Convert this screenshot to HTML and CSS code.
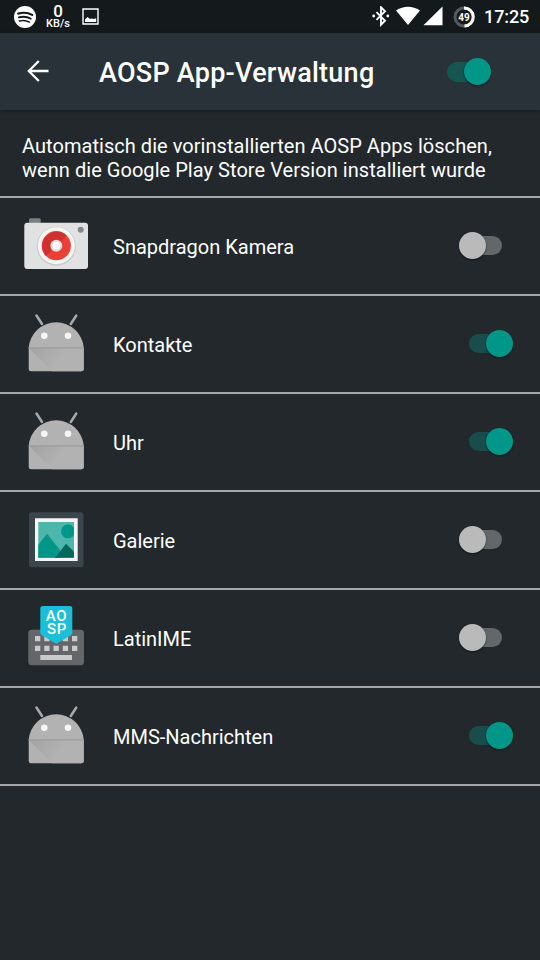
FILE: index.html
```html
<!DOCTYPE html>
<html lang="de">
<head>
<meta charset="utf-8">
<title>AOSP App-Verwaltung</title>
<link rel="stylesheet" href="styles.css">
</head>
<body>
<svg class="defs" aria-hidden="true">
  <linearGradient id="fade" x1="0" y1="0" x2="1" y2="0.3"><stop offset="0" stop-color="#a2a2a2"/><stop offset="0.65" stop-color="#b2b2b2"/></linearGradient>
  <symbol id="android" viewBox="0 0 68 76">
    <path d="M14.500 9.500l5.500 8.500M54.300 9.500l-5.500 8.500" stroke="#a9a9a9" stroke-width="2.500" stroke-linecap="round"/>
    <path d="M6.700 41.500a27.600 27.600 0 0 1 55 0v21.200a2.500 2.500 0 0 1-2.500 2.500h-50a2.500 2.500 0 0 1-2.500-2.500z" fill="#b2b2b2"/>
    <path d="M7 42h54.700v20.700a2.500 2.500 0 0 1-2.500 2.500H30z" fill="url(#fade)"/>
    <path d="M6.700 41.200h55v1.200h-55z" fill="#9b9b9b"/>
    <circle cx="22.300" cy="29.700" r="3.300" fill="#f5f5f5"/><circle cx="46" cy="29.700" r="3.300" fill="#f5f5f5"/>
  </symbol>
</svg>
<div class="status">
  <svg class="spotify" width="22" height="22" viewBox="0 0 22 22" fill="none" stroke="#14191c" stroke-linecap="round"><circle cx="11" cy="11" r="11" fill="#fff" stroke="none"/><path d="M4.200 7.600c5-1.400 10-.9 14 1.300" stroke-width="2.200"/><path d="M4.800 11.400c4.200-1.100 8.500-.7 12 1.300" stroke-width="1.800"/><path d="M5.300 14.900c3.600-.9 7.200-.6 10 1.200" stroke-width="1.500"/></svg>
  <div class="speed"><span class="rate">0</span><span class="unit">KB/s</span></div>
  <svg class="picture" width="17" height="17" viewBox="0 0 17 17"><path d="M1 1h15v15H1z" fill="none" stroke="#fff" stroke-width="1.400"/><path d="M3 14v-2.500l2.500-2.500 2.500 2 1.700-.5 2 .5 2.500-.8V14z" fill="#fff"/></svg>
  <svg class="signals" width="72" height="22" viewBox="0 0 72 22"><path d="M4.500 6.200l8.500 8.600-4 3.900V1.300l4 3.900-8.500 8.600" fill="none" stroke="#fff" stroke-width="1.900"/><circle cx="1.700" cy="10" r="1.400" fill="#fff"/><circle cx="15.800" cy="10" r="1.400" fill="#fff"/><path d="M24 4.500q12-7.500 24 0L36 19z" fill="#fff"/><path d="M51.500 19.300L70.500.5v18.800z" fill="#fff"/></svg>
  <svg class="battery" width="22" height="22" viewBox="0 0 22 22"><circle cx="11" cy="11" r="9" fill="none" stroke="#55595b" stroke-width="3"/><path d="M11 2a9 9 0 0 1 .5 18" fill="none" stroke="#fff" stroke-width="3"/><text x="11" y="14.500" text-anchor="middle">49</text></svg>
  <span class="clock">17:25</span>
</div>
<header class="bar">
  <svg class="back" width="22" height="22" viewBox="0 0 22 22"><path d="M21.500 11H1.800M11.800 1L1.800 11l10 10" fill="none" stroke="#fff" stroke-width="2.300"/></svg>
  <h1>AOSP App-Verwaltung</h1>
  <span class="switch on main"></span>
</header>
<p class="intro">Automatisch die vorinstallierten AOSP Apps löschen,<br>wenn die Google Play Store Version installiert wurde</p>
<ul class="list">
  <li><svg class="icon" viewBox="0 0 68 76"><rect x="7" y="10.300" width="11.700" height="8" rx="1.500" fill="#7c7e7f"/><rect x="2.300" y="14.700" width="63.700" height="46.300" rx="3" fill="#e0e2e1"/><circle cx="34.300" cy="38.300" r="19.500" fill="#c8cac9"/><circle cx="34.300" cy="37.700" r="18.500" fill="#f5f5f5"/><circle cx="34.300" cy="37.700" r="14.600" fill="#ea4035"/><path d="M24 48A14.600 14.600 0 0 1 44.600 27.400z" fill="#cf3130"/><circle cx="34.300" cy="37.700" r="6" fill="#dcdcdc"/><circle cx="34.300" cy="37.700" r="3.800" fill="#fff"/><circle cx="58.700" cy="21.700" r="3" fill="#858788"/></svg><span class="name">Snapdragon Kamera</span><span class="switch"></span></li>
  <li><svg class="icon"><use href="#android"/></svg><span class="name">Kontakte</span><span class="switch on"></span></li>
  <li><svg class="icon"><use href="#android"/></svg><span class="name">Uhr</span><span class="switch on"></span></li>
  <li><svg class="icon" viewBox="0 0 68 76"><rect x="7" y="10.300" width="54.500" height="55" rx="3" fill="#3a464c"/><path d="M13 16.300h42.700V59H13z" fill="#f5f5f5"/><path d="M16.300 20H52v35.700H16.300z" fill="#4db6ac"/><path d="M52 25.700a7 7 0 1 0 0 7.300zM16.300 42.700L25 31.700l13.500 17V55.700H16.300z" fill="#009688"/><path d="M33 55.700l11-14 8 8v6z" fill="#00695c"/></svg><span class="name">Galerie</span><span class="switch"></span></li>
  <li><svg class="icon" viewBox="0 0 68 76"><rect x="6.300" y="29.700" width="55.700" height="35.500" rx="3.500" fill="#636769"/><path d="M13 38.700h45M13 48.300h45" stroke="#c9cbcb" stroke-width="5.300" stroke-dasharray="5.300 3.950"/><path d="M18.300 55H50v5H18.300z" fill="#c9cbcb"/><path d="M18.300 8.500a2.500 2.500 0 0 1 2.500-2.500h27a2.500 2.500 0 0 1 2.500 2.500v24q0 1.700-1.500 2.700L34.300 43.700 19.800 35.200q-1.500-1-1.500-2.700z" fill="#1dbfd8"/><text x="34.600" y="21.300" text-anchor="middle">AO</text><text x="35" y="33.700" text-anchor="middle">SP</text></svg><span class="name">LatinIME</span><span class="switch"></span></li>
  <li><svg class="icon"><use href="#android"/></svg><span class="name">MMS-Nachrichten</span><span class="switch on"></span></li>
</ul>
</body>
</html>
```

FILE: styles.css
```css
* { box-sizing: border-box; }
body { margin: 0; height: 960px; overflow: hidden; background: #22282c; color: #fff; font-family: Roboto, "Liberation Sans", sans-serif; }
.defs { position: absolute; width: 0; height: 0; }
.status { display: flex; align-items: center; height: 33px; padding: 0 11px 0 14px; background: #14191c; }
.speed { display: flex; flex-direction: column; align-items: center; width: 24px; margin-left: 10px; font-weight: 500; }
.rate { font-size: 17px; line-height: 14px; }
.unit { font-size: 11px; line-height: 11px; }
.picture { margin-left: 12px; }
.signals { margin-left: auto; }
.battery { margin-left: 9px; }
.battery text { font-size: 10px; font-weight: 700; fill: #fff; }
.clock { margin-left: 9px; width: 45px; font-size: 18px; font-weight: 500; letter-spacing: -0.1px; white-space: nowrap; }
.bar { display: flex; align-items: center; height: 77px; padding: 0 49px 0 27px; background: #283238; box-shadow: 0 1px 3px #14191c; }
.back { margin-bottom: 1px; }
h1 { margin: 3px 0 0 50px; font-size: 27px; line-height: 32px; font-weight: 500; letter-spacing: 0.25px; white-space: nowrap; }
.intro { margin: 0; height: 88px; padding: 24px 22px 0; border-bottom: 2px solid #a5a7a9; font-size: 20px; line-height: 24px; letter-spacing: 0.045px; white-space: nowrap; }
.list { margin: 0; padding: 0; list-style: none; }
.list li { display: flex; align-items: center; height: 98px; padding: 0 27px 0 22px; border-bottom: 2px solid #a5a7a9; }
.icon { width: 68px; height: 76px; flex: none; }
.icon text { font: 500 15px Roboto, sans-serif; letter-spacing: 0.7px; fill: #fff; }
.name { margin: 2px 0 0 23px; font-size: 20px; line-height: 24px; }
.switch { display: flex; align-items: center; width: 43px; height: 19px; margin: 0 11px 1px auto; border-radius: 10px; background: #62676a; }
.switch::before { content: ""; flex: none; width: 27px; height: 27px; border-radius: 50%; background: #bababa; box-shadow: 0 1px 2px rgba(0,0,0,.5); }
.switch.on { justify-content: flex-end; width: 44px; margin-right: 0; background: #194d4c; }
.switch.on::before { background: #009688; }
.switch.main { height: 20px; margin-bottom: 0; background: #155650; }
```
